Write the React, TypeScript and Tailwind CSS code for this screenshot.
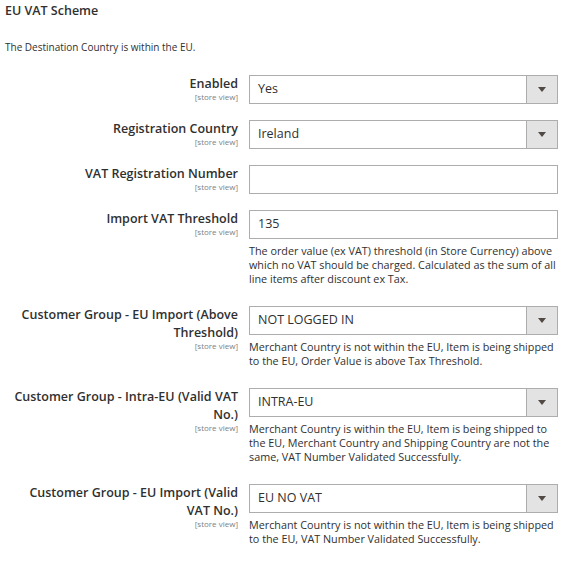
import React from "react";

type Field = {
  label: string;
  kind: "select" | "text";
  value: string;
  comment?: string;
};

const fields: Field[] = [
  { label: "Enabled", kind: "select", value: "Yes" },
  { label: "Registration Country", kind: "select", value: "Ireland" },
  { label: "VAT Registration Number", kind: "text", value: "" },
  {
    label: "Import VAT Threshold",
    kind: "text",
    value: "135",
    comment:
      "The order value (ex VAT) threshold (in Store Currency) above which no VAT should be charged. Calculated as the sum of all line items after discount ex Tax.",
  },
  {
    label: "Customer Group - EU Import (Above Threshold)",
    kind: "select",
    value: "NOT LOGGED IN",
    comment:
      "Merchant Country is not within the EU, Item is being shipped to the EU, Order Value is above Tax Threshold.",
  },
  {
    label: "Customer Group - Intra-EU (Valid VAT No.)",
    kind: "select",
    value: "INTRA-EU",
    comment:
      "Merchant Country is within the EU, Item is being shipped to the EU, Merchant Country and Shipping Country are not the same, VAT Number Validated Successfully.",
  },
  {
    label: "Customer Group - EU Import (Valid VAT No.)",
    kind: "select",
    value: "EU NO VAT",
    comment:
      "Merchant Country is not within the EU, Item is being shipped to the EU, VAT Number Validated Successfully.",
  },
];

function Control({ field }: { field: Field }) {
  if (field.kind === "text") {
    return (
      <div className="h-[29px] border border-[#adadad] bg-white flex items-center pl-2 text-[12.5px] text-[#303030]">
        {field.value}
      </div>
    );
  }
  return (
    <div className="h-[29px] border border-[#adadad] bg-white flex">
      <div className="flex-1 flex items-center pl-2 text-[12.5px] text-[#303030]">{field.value}</div>
      {/* dropdown addon */}
      <div className="w-[31px] bg-[#e3e3e3] border-l border-[#adadad] flex items-center justify-center">
        <svg width="8" height="5" viewBox="0 0 8 5" aria-hidden="true">
          <path d="M0 0h8L4 5z" fill="#514943" />
        </svg>
      </div>
    </div>
  );
}

function FieldRow({ field }: { field: Field }) {
  return (
    <div className="flex mb-4">
      <div className="w-[238px] pl-[8px] text-right">
        <div className="text-[12.5px] leading-[18px] font-semibold text-[#303030]">{field.label}</div>
        <div className="text-[8px] leading-[8px] text-[#808080]">[store view]</div>
      </div>
      <div className="ml-[11px] w-[309px]">
        <Control field={field} />
        {field.comment && (
          <p className="mt-[5px] mb-[4px] text-[10.8px] leading-[14px] text-[#303030]">
            {field.comment}
          </p>
        )}
      </div>
    </div>
  );
}

export default function App() {
  return (
    <div
      className="w-[585px] h-[575px] bg-white overflow-hidden px-[5px]"
      style={{ fontFamily: '"Open Sans", sans-serif' }}
    >
      <h2 className="pt-[2px] text-[12.5px] leading-[18px] font-semibold text-[#303030]">EU VAT Scheme</h2>
      <p className="mt-[20px] text-[10px] leading-[14px] text-[#303030]">
        The Destination Country is within the EU.
      </p>
      <div className="mt-[21px] -ml-[5px]">
        {fields.map((f) => (
          <FieldRow key={f.label} field={f} />
        ))}
      </div>
    </div>
  );
}
